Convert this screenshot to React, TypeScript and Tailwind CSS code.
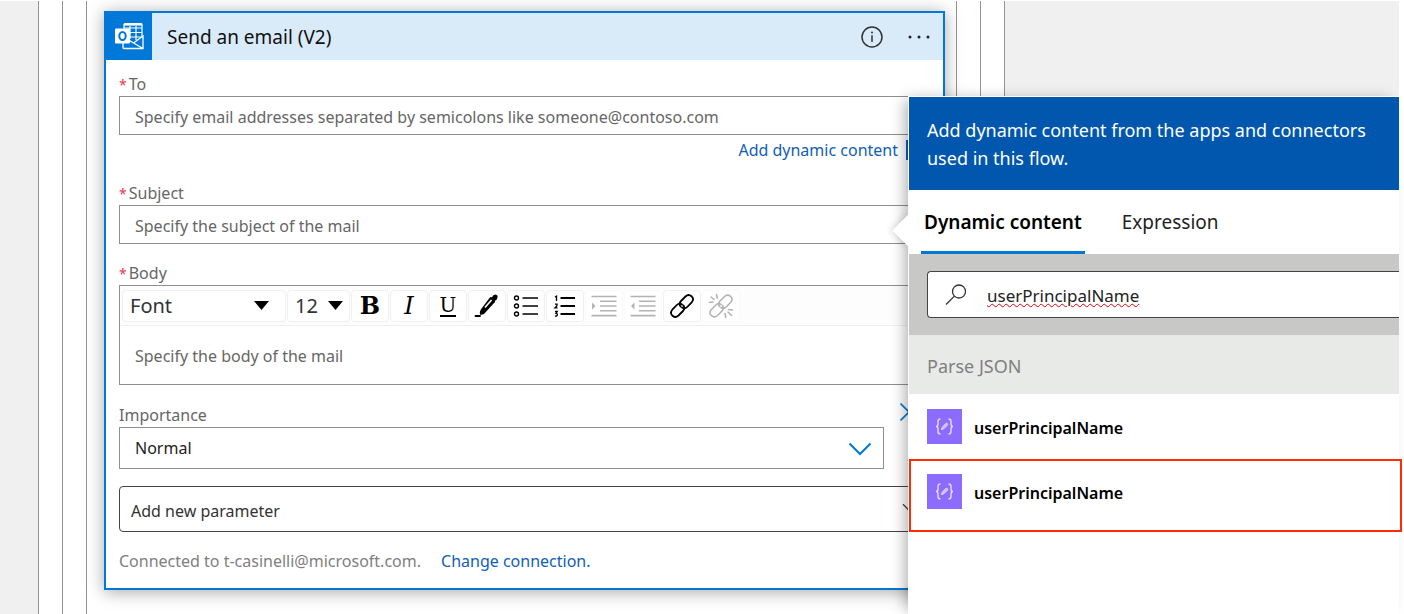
import type { ReactNode } from "react";
import { clsx } from "clsx";

const OutlookIcon = () => (
  <svg className="w-[29px] h-[27px]" viewBox="0 0 29 27" fill="none" stroke="#fff">
    <path d="M9 6V1.600q0-1 1-1h16q1 0 1 1V13" strokeWidth="1.200" />
    <path d="M9 1.600h18" strokeWidth="2" />
    <path d="M15 3v13M21 3v14M9 5h18M14 9.500h13M14 14h13" strokeWidth="1.200" />
    <path d="M8 20v4.500q0 1 1 1h19V13L18.500 20l-4-2.500M18.500 20l9.500 5.500" strokeWidth="1.300" />
    <rect x="0" y="5.500" width="15" height="15" rx="1" fill="#fff" stroke="none" />
    <ellipse cx="7.500" cy="13" rx="3.200" ry="3.900" stroke="#0078d4" strokeWidth="2" />
  </svg>
);

const InfoIcon = () => (
  <svg className="w-[22px] h-[22px]" viewBox="0 0 22 22" fill="none" stroke="#333">
    <circle cx="11" cy="11" r="10" strokeWidth="1.500" />
    <path d="M11 9.200v6.800" strokeWidth="1.500" />
    <circle cx="11" cy="6.500" r="1" fill="#333" stroke="none" />
  </svg>
);

const DotsIcon = () => (
  <svg className="w-[22px] h-[4px]" viewBox="0 0 22 4" fill="#222">
    <circle cx="2" cy="2" r="1.500" />
    <circle cx="11" cy="2" r="1.500" />
    <circle cx="20" cy="2" r="1.500" />
  </svg>
);

const SearchIcon = () => (
  <svg className="w-[22px] h-[22px] shrink-0" viewBox="0 0 22 22" fill="none" stroke="#333" strokeWidth="1.300">
    <circle cx="14" cy="7.500" r="6.500" />
    <path d="M9.400 12.100L1 20.500" />
  </svg>
);

const Chevron = ({ className }: { className: string }) => (
  <svg className={className} viewBox="0 0 24 14" fill="none" stroke="currentColor" strokeWidth="2">
    <path d="M1.500 1.500L12 12L22.500 1.500" />
  </svg>
);

const Triangle = ({ className }: { className: string }) => (
  <svg className={className} viewBox="0 0 15 9">
    <path d="M0 0h15L7.500 9z" />
  </svg>
);

const BraceIcon = () => (
  <span className="flex items-center justify-center w-[35px] h-[35px] shrink-0 bg-[#8c6cff]">
    <svg className="w-[19px] h-[17px]" viewBox="0 0 19 17" fill="none" stroke="#e4dcff" strokeWidth="1.400">
      <path d="M5.500 1Q3 1 3 3.500V6q0 2.500-2 2.500q2 0 2 2.500v2.500Q3 16 5.500 16" />
      <path d="M13.500 1Q16 1 16 3.500V6q0 2.500 2 2.500q-2 0-2 2.500v2.500q0 2.500-2.500 2.500" />
      <path d="M6.500 11.500l.7-2.300 3.600-3.600q1-.7 1.600 0t0 1.600L8.800 10.800z" fill="#cbbdff" strokeWidth="1" />
    </svg>
  </span>
);

const PenIcon = () => (
  <svg className="w-[26px] h-[26px]" viewBox="0 0 26 26">
    <path d="M15.500 5q1-1.500 2.500-.8q1-2.700 3.500-2.700q2.500.5 2 3t-2.500 3.200q.5 1.800-1 2.300L10.500 20.500q-1.500 1.500-4.500 1.300q-.8-2.800.8-5.300z" />
    <path d="M11 14.500L17.500 7" stroke="#fff" strokeWidth="1.600" fill="none" />
    <path d="M1.500 23h4.500" stroke="#000" strokeWidth="1.800" strokeLinecap="round" />
  </svg>
);

const BulletsIcon = () => (
  <svg className="w-[26px] h-[26px]" viewBox="0 0 26 26" fill="none" stroke="#000">
    <g strokeWidth="1.400">
      <circle cx="3.500" cy="5" r="2" />
      <circle cx="3.500" cy="13" r="2" />
      <circle cx="3.500" cy="21" r="2" />
    </g>
    <path d="M9.500 5H25M9.500 13H25M9.500 21H25" strokeWidth="1.600" />
  </svg>
);

const NumbersIcon = () => (
  <svg className="w-[26px] h-[26px]" viewBox="0 0 26 26" fill="none" stroke="#000">
    <path d="M8.500 5H23M8.500 13H23M8.500 21H23" strokeWidth="2.200" />
    <path d="M3 4l1.500-.8V8M3 11.200h2v1.600l-2 2h2.500M3 18.500h2.200L4 20.300q1.500 0 1.300 1.500T3 23" strokeWidth="1.300" />
  </svg>
);

const IndentIcon = ({ back }: { back?: boolean }) => (
  <svg className="w-[26px] h-[26px]" viewBox="0 0 26 26" fill="#b3b3b3" stroke="#b3b3b3">
    <path d="M.500 3.500h25M9 8.200h16.500M9 13h16.500M9 17.800h16.500M.500 22.600h25" strokeWidth="1.600" />
    <path d={back ? "M4.500 9.500v7L1 13z" : "M1 9.500v7L4.500 13z"} stroke="none" />
  </svg>
);

const LinkIcon = ({ broken }: { broken?: boolean }) => (
  <svg
    className="w-[26px] h-[26px]"
    viewBox="0 0 26 26"
    fill="none"
    stroke={broken ? "#b3b3b3" : "#000"}
    strokeWidth={broken ? "1.600" : "1.800"}
    strokeLinecap="round"
  >
    <path d="M11.500 13.500q-2-3 .5-5.500l4.500-4.500q3-2.800 6-.2t.2 6L18.200 14q-2.500 2.500-5.200.5" />
    <path d="M14.500 12.500q2 3-.5 5.500l-4.500 4.500q-3 2.800-6 .2t-.2-6L7.800 12q2.500-2.500 5.200-.5" />
    {broken && <path d="M3 4l3 2.500M8.500 1.500l.8 3.500M1.500 9.500l3.500-.5M17 20.500l.8 4M20 19l3.500 3.500M20.500 16.500l4 .5" />}
  </svg>
);

const tools: { name: string; icon: ReactNode; disabled?: boolean }[] = [
  { name: "Bold", icon: <span className="font-['DejaVu_Serif',serif] font-bold text-2xl">B</span> },
  { name: "Italic", icon: <span className="font-['DejaVu_Serif',serif] italic text-2xl">I</span> },
  {
    name: "Underline",
    icon: <span className="font-['DejaVu_Serif',serif] text-xl leading-5 border-b-2 border-black">U</span>,
  },
  { name: "Text color", icon: <PenIcon /> },
  { name: "Bulleted list", icon: <BulletsIcon /> },
  { name: "Numbered list", icon: <NumbersIcon /> },
  { name: "Indent", icon: <IndentIcon />, disabled: true },
  { name: "Outdent", icon: <IndentIcon back />, disabled: true },
  { name: "Link", icon: <LinkIcon /> },
  { name: "Unlink", icon: <LinkIcon broken />, disabled: true },
];

const Label = ({ id, text, required }: { id: string; text: string; required?: boolean }) => (
  <label htmlFor={id} className="block text-base leading-6 text-[#666]">
    {required && <span className="text-sm text-[#e8394a] mr-[2px]">*</span>}
    {text}
  </label>
);

const field =
  "block w-full border border-[#8f8f8f] bg-transparent px-[15px] text-base text-[#222] placeholder:text-[#666] placeholder:opacity-100 outline-none";

const EmailCard = () => (
  <section className="flex-1 self-start min-w-0 border-2 border-[#0078d7] bg-white shadow-[0_2px_16px_rgba(0,0,0,0.35)]">
    <header className="flex items-center h-[47px] bg-[#d9ebf9]">
      <span className="flex items-center justify-center w-[46px] h-full bg-[#0078d7]">
        <OutlookIcon />
      </span>
      <h1 className="ml-[15px] pt-[2px] text-[19px] text-[#111]">Send an email (V2)</h1>
      <button type="button" aria-label="Info" className="ml-auto">
        <InfoIcon />
      </button>
      <button type="button" aria-label="More" className="ml-[25px] mr-[13px]">
        <DotsIcon />
      </button>
    </header>

    <div className="px-[13px] pt-[12px] pb-[15px]">
      <Label id="to" text="To" required />
      <input
        id="to"
        className={clsx(field, "h-[39px] pt-[2px]")}
        placeholder="Specify email addresses separated by semicolons like someone@contoso.com"
      />
      <div className="flex justify-end items-center gap-2 mt-[3px] mr-[4px] h-6 text-base text-[#1160b7]">
        <a href="#dynamic">Add dynamic content</a>
        <span className="w-5 h-5 bg-[#1160b7]" />
      </div>

      <div className="mt-[19px]">
        <Label id="subject" text="Subject" required />
        <input
          id="subject"
          className={clsx(field, "h-[39px] pt-[2px]")}
          placeholder="Specify the subject of the mail"
        />
      </div>

      <div className="mt-[17px]">
        <Label id="body" text="Body" required />
        <div className="border border-[#8f8f8f]">
          <div className="flex items-center gap-px h-[40px] px-[2px] border-b border-[#f0f0f0] bg-[#fdfdfd]">
            <div className="relative w-[164px] h-8 rounded-sm border border-[#f0f0f0] bg-white">
              <select
                aria-label="Font"
                className="w-full h-full appearance-none pl-[7px] text-xl leading-7 text-[#333] outline-none"
              >
                <option>Font</option>
              </select>
              <Triangle className="absolute right-[16px] top-[10px] w-[15px] h-[9px] pointer-events-none" />
            </div>
            <div className="relative w-[63px] h-8 rounded-sm border border-[#f0f0f0] bg-white">
              <select
                aria-label="Font size"
                className="w-full h-full appearance-none pl-[7px] text-xl leading-7 text-[#333] outline-none"
              >
                <option>12</option>
              </select>
              <Triangle className="absolute right-[6px] top-[10px] w-[15px] h-[9px] pointer-events-none" />
            </div>
            {tools.map(({ name, icon, disabled }) => (
              <button
                key={name}
                type="button"
                aria-label={name}
                disabled={disabled}
                className={clsx(
                  "flex items-center justify-center w-[38px] h-8 rounded-sm border bg-white",
                  disabled ? "border-[#fafafa]" : "border-[#f0f0f0]"
                )}
              >
                {icon}
              </button>
            ))}
          </div>
          <textarea
            id="body"
            className="block w-full h-[58px] resize-none px-[15px] pt-[18px] text-base leading-6 placeholder:text-[#666] outline-none"
            placeholder="Specify the body of the mail"
          />
        </div>
      </div>

      <div className="mt-[18px]">
        <div className="flex items-start justify-between">
          <Label id="importance" text="Importance" />
          <button type="button" aria-label="Remove importance" className="mr-[12px] text-[#0078d7]">
            <svg className="w-[18px] h-[18px]" viewBox="0 0 18 18" stroke="currentColor" strokeWidth="1.600">
              <path d="M.500.500l17 17M17.500.500l-17 17" />
            </svg>
          </button>
        </div>
        <div className="relative mr-[46px]">
          <select id="importance" className={clsx(field, "h-[42px] appearance-none")}>
            <option>Normal</option>
          </select>
          <Chevron className="absolute right-[12px] top-[15px] w-[24px] h-[14px] text-[#0078d7] pointer-events-none" />
        </div>
      </div>

      <div className="relative mt-[17px]">
        <select
          aria-label="Add new parameter"
          className="block w-full h-[46px] appearance-none rounded-sm border border-[#444] px-[11px] pt-[3px] text-base text-[#333] outline-none"
        >
          <option>Add new parameter</option>
        </select>
        <Chevron className="absolute right-[12px] top-[17px] w-[16px] h-[10px] text-[#444] pointer-events-none" />
      </div>

      <p className="mt-[17px] text-base leading-6 text-[#808080]">
        Connected to t-casinelli@microsoft.com.
        <a href="#connection" className="ml-5 text-[#1160b7]">
          Change connection.
        </a>
      </p>
    </div>
  </section>
);

const DynamicContent = () => (
  <aside className="absolute top-[96px] bottom-0 right-[5px] w-[491px] border-l border-t border-white bg-white shadow-[-6px_0_14px_-4px_rgba(0,0,0,0.35)]">
    <span className="absolute -left-[12px] top-[122px] w-[23px] h-[23px] rotate-45 bg-white shadow-[-2px_2px_6px_rgba(0,0,0,0.12)]" />
    <div className="relative bg-white">
      <p className="bg-[#0057ad] px-[18px] pt-[19px] pb-[18px] text-lg leading-7 text-white">
        Add dynamic content from the apps and connectors used in this flow.
      </p>
      <div role="tablist" className="flex h-16 pl-[12px]">
        <button
          type="button"
          role="tab"
          aria-selected="true"
          className="h-full border-b-3 border-[#0078d4] px-[3px] pt-[4px] text-[19px] font-semibold text-black"
        >
          Dynamic content
        </button>
        <button
          type="button"
          role="tab"
          aria-selected="false"
          className="ml-[34px] px-[3px] pt-px text-[19px] text-[#222]"
        >
          Expression
        </button>
      </div>
      <div className="h-[81px] overflow-hidden bg-[#c8c9c7] pt-[17px] pl-[18px]">
        <label className="flex items-center h-[47px] rounded-l-sm border border-r-0 border-[#444] bg-white pl-[17px]">
          <SearchIcon />
          <input
            aria-label="Search dynamic content"
            defaultValue="userPrincipalName"
            className="ml-[20px] w-full pt-[2px] text-[17px] text-[#222] outline-none underline decoration-wavy decoration-red-600 decoration-1"
          />
        </label>
      </div>
      <h2 className="bg-[#e8eae7] px-[18px] h-[59px] leading-[62px] text-lg text-[#808080]">Parse JSON</h2>
      <button type="button" className="flex items-center gap-[12px] w-full h-[65px] pl-[18px] text-base font-semibold">
        <BraceIcon />
        <span className="pt-[3px]">userPrincipalName</span>
      </button>
      <div className="-mr-[3px] h-[73px] border-2 border-[#ff2d00]">
        <button
          type="button"
          className="flex items-center gap-[12px] w-full h-[61px] pl-[16px] text-base font-semibold"
        >
          <BraceIcon />
          <span className="pt-[3px]">userPrincipalName</span>
        </button>
      </div>
    </div>
  </aside>
);

const App = () => {
  return (
    <main className="relative flex min-h-screen overflow-hidden bg-white pt-px pr-[5px] font-['Noto_Sans',sans-serif]">
      <div className="flex flex-1 bg-[#f0f0f0] pl-[38px] pr-[394px]">
        <div className="flex flex-1 min-w-0 border-x border-[#979393] bg-white px-[23px]">
          <div className="flex flex-1 min-w-0 border-x border-[#979393] px-[23px]">
            <div className="flex flex-1 min-w-0 border-x border-[#979393] pl-[17px] pr-[11px] pt-[10px] pb-6">
              <EmailCard />
            </div>
          </div>
        </div>
      </div>
      <DynamicContent />
    </main>
  );
};

export default App;
